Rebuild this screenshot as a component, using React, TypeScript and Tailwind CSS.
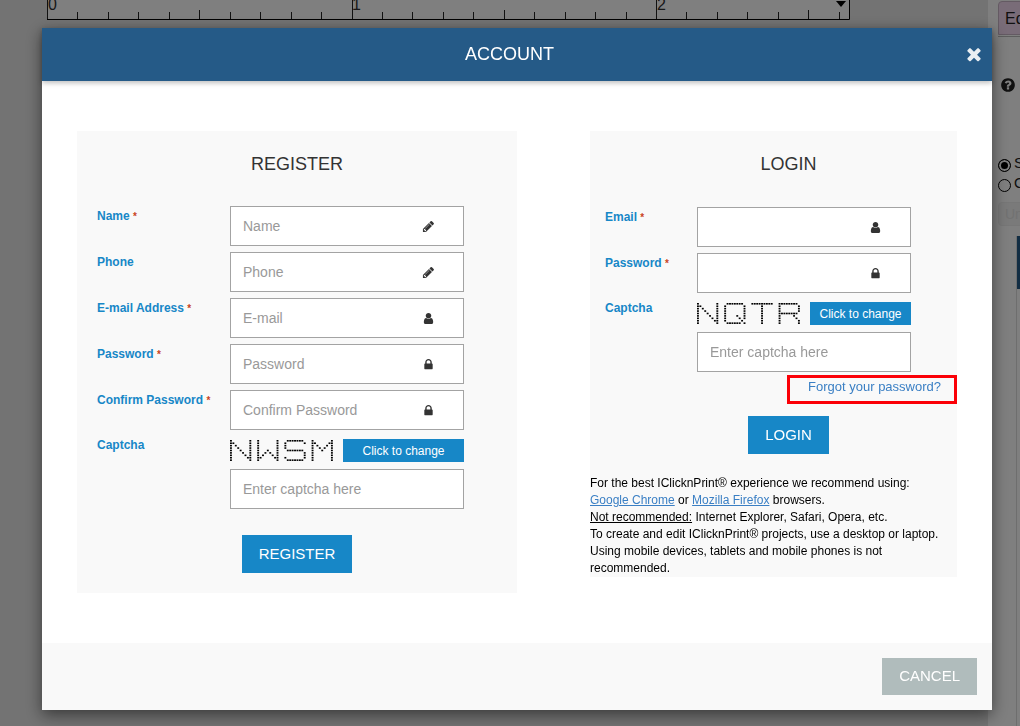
import { useState } from "react";

const ICONS = {
  times:
    "M1490 1322q0 40-28 68l-136 136q-28 28-68 28t-68-28l-294-294-294 294q-28 28-68 28t-68-28l-136-136q-28-28-28-68t28-68l294-294-294-294q-28-28-28-68t28-68l136-136q28-28 68-28t68 28l294 294 294-294q28-28 68-28t68 28l136 136q28 28 28 68t-28 68l-294 294 294 294q28 28 28 68z",
  lock: "M640 768h512v-192q0-106-75-181t-181-75-181 75-75 181v192zm832 96v576q0 40-28 68t-68 28h-960q-40 0-68-28t-28-68v-576q0-40 28-68t68-28h32v-192q0-184 132-316t316-132 316 132 132 316v192h32q40 0 68 28t28 68z",
  user: "M1536 1399q0 109-62.5 187t-150.5 78h-854q-88 0-150.5-78t-62.5-187q0-85 8.5-160.5t31.5-152 58.5-131 94-89 134.5-34.5q131 128 313 128t313-128q76 0 134.5 34.5t94 89 58.5 131 31.5 152 8.5 160.5zm-256-887q0 159-112.5 271.5t-271.5 112.5-271.5-112.5-112.5-271.5 112.5-271.5 271.5-112.5 271.5 112.5 112.5 271.5z",
  pencil:
    "M491 1536l91-91-235-235-91 91v107h128v128h107zm523-928q0-22-22-22-10 0-17 7l-542 542q-7 7-7 17 0 22 22 22 10 0 17-7l542-542q7-7 7-17zm-54-192l416 416-832 832h-416v-416zm683 96q0 53-37 90l-166 166-416-416 166-165q36-38 90-38 53 0 91 38l235 234q37 39 37 91z",
  question:
    "M1024 1376v-192q0-14-9-23t-23-9h-192q-14 0-23 9t-9 23v192q0 14 9 23t23 9h192q14 0 23-9t9-23zm256-672q0-88-55.5-163t-138.5-116-170-41q-243 0-371 213-15 24 8 42l132 100q7 6 19 6 16 0 25-12 53-68 86-92 34-24 86-24 48 0 85.5 26t37.5 59q0 38-20 61t-68 45q-63 28-115.5 86.5t-52.5 125.5v36q0 14 9 23t23 9h192q14 0 23-9t9-23q0-19 21.5-49.5t54.5-49.5q32-18 49-28.5t46-35 44.5-48 28-60.5 12.5-81zm384 192q0 209-103 385.5t-279.5 279.5-385.5 103-385.5-103-279.5-279.5-103-385.5 103-385.5 279.5-279.5 385.5-103 385.5 103 279.5 279.5 103 385.5z",
};

type IconName = keyof typeof ICONS;

function Icon({ name, className }: { name: IconName; className: string }) {
  return (
    <svg viewBox="0 0 1792 1792" fill="currentColor" aria-hidden="true" className={className}>
      <path d={ICONS[name]} />
    </svg>
  );
}

// dot patterns for the captcha, 9x9 per character
const DOTS: Record<string, string[]> = {
  N: ["#.......#", "##......#", "#.#.....#", "#..#....#", "#...#...#", "#....#..#", "#.....#.#", "#......##", "#.......#"],
  W: ["#.......#", "#.......#", "#.......#", "#.......#", "#...#...#", "#..#.#..#", "#.#...#.#", "##.....##", "#.......#"],
  S: [".#######.", "#.......#", "#........", "#........", ".#######.", "........#", "........#", "#.......#", ".#######."],
  M: ["#.......#", "##.....##", "#.#...#.#", "#..#.#..#", "#...#...#", "#.......#", "#.......#", "#.......#", "#.......#"],
  Q: [".#######.", "#.......#", "#.......#", "#.......#", "#.......#", "#....#..#", "#.....#.#", "#......#.", ".######.#"],
  T: ["#########", "....#....", "....#....", "....#....", "....#....", "....#....", "....#....", "....#....", "....#...."],
  R: ["########.", "#.......#", "#.......#", "#.......#", "########.", "#.....#..", "#......#.", "#.......#", "#.......#"],
};

function Captcha({ code }: { code: string }) {
  return (
    <svg viewBox="0 0 104 23" role="img" aria-label="Captcha" className="h-[23px] w-[104px] shrink-0">
      {code.split("").map((char, i) =>
        DOTS[char].map((row, y) =>
          row.split("").map((dot, x) =>
            dot === "#" ? (
              <rect key={`${i}-${y}-${x}`} x={i * 27.2 + x * 2.42} y={1 + y * 2.42} width="1.9" height="1.6" />
            ) : null
          )
        )
      )}
    </svg>
  );
}

interface FieldProps {
  id: string;
  label: string;
  type?: string;
  placeholder?: string;
  required?: boolean;
  icon: IconName;
  columns: string;
}

const inputClass =
  "block h-10 w-full border border-[#a3a3a3] bg-white pl-3 text-sm text-[#333] placeholder:text-[#999] outline-none";
const labelClass = "text-xs leading-4 font-bold text-[#1787c7]";

function Field({ id, label, type = "text", placeholder, required, icon, columns }: FieldProps) {
  return (
    <div className={`grid ${columns}`}>
      <label htmlFor={id} className={`${labelClass} pt-[2px]`}>
        {label} {required && <span className="text-[10px] text-[#c9431e]">*</span>}
      </label>
      <div className="relative">
        <input id={id} name={id} type={type} placeholder={placeholder} className={`${inputClass} pr-12`} />
        <Icon name={icon} className="absolute top-[14px] right-[29px] size-[13px] text-[#333]" />
      </div>
    </div>
  );
}

function CaptchaField({ id, code, columns }: { id: string; code: string; columns: string }) {
  return (
    <div className={`grid ${columns}`}>
      <label htmlFor={id} className={`${labelClass} pt-px`}>
        Captcha
      </label>
      <div className="pt-[3px]">
        <div className="mb-[7px] flex gap-[9px]">
          <Captcha code={code} />
          <button type="button" className="h-[23px] flex-1 bg-[#1787c7] text-xs whitespace-nowrap text-white">
            Click to change
          </button>
        </div>
        <input id={id} name={id} type="text" placeholder="Enter captcha here" className={inputClass} />
      </div>
    </div>
  );
}

const submitClass = "h-[38px] bg-[#1787c7] px-[17px] text-[15px] text-white uppercase";

function RegisterForm() {
  const columns = "grid-cols-[133px_1fr]";
  return (
    <form className="bg-[#f9f9f9] pt-[21px] pb-5">
      <h2 className="text-center text-lg leading-6 text-[#333]">REGISTER</h2>
      <div className="flex flex-col gap-1.5 pt-[30px] pr-[53px] pl-5">
        <Field id="name" label="Name" placeholder="Name" required icon="pencil" columns={columns} />
        <Field id="phone" label="Phone" placeholder="Phone" icon="pencil" columns={columns} />
        <Field id="email" label="E-mail Address" placeholder="E-mail" required icon="user" columns={columns} />
        <Field id="password" label="Password" type="password" placeholder="Password" required icon="lock" columns={columns} />
        <Field id="confirm" label="Confirm Password" type="password" placeholder="Confirm Password" required icon="lock" columns={columns} />
        <CaptchaField id="captcha" code="NWSM" columns={columns} />
      </div>
      <div className="pt-[26px] text-center">
        <button type="button" className={submitClass}>
          Register
        </button>
      </div>
    </form>
  );
}

function LoginForm() {
  const columns = "grid-cols-[92px_1fr]";
  return (
    <form className="self-start bg-[#f9f9f9] pt-[21px]">
      <h2 className="pl-[30px] text-center text-lg leading-6 text-[#333]">LOGIN</h2>
      <div className="flex flex-col gap-1.5 pt-[31px] pr-[46px] pl-[15px]">
        <Field id="login-email" label="Email" required icon="user" columns={columns} />
        <Field id="login-password" label="Password" type="password" required icon="lock" columns={columns} />
        <CaptchaField id="login-captcha" code="NQTR" columns={columns} />
      </div>
      <div className="flex justify-end pt-[3px]">
        <div className="flex h-[29px] w-[170px] justify-end border-3 border-[#fb0007] pr-[13px]">
          <a href="#forgot" className="text-[13px] leading-[18px] text-[#3a7fc4]">
            Forgot your password?
          </a>
        </div>
      </div>
      <div className="pt-3 pl-[30px] text-center">
        <button type="button" className={submitClass}>
          Login
        </button>
      </div>
      <p className="pt-[21px] text-xs leading-[17px] text-black">
        For the best IClicknPrint® experience we recommend using:
        <br />
        <a href="#chrome" className="text-[#3a7fc4] underline">
          Google Chrome
        </a>{" "}
        or{" "}
        <a href="#firefox" className="text-[#3a7fc4] underline">
          Mozilla Firefox
        </a>{" "}
        browsers.
        <br />
        <u>Not recommended:</u> Internet Explorer, Safari, Opera, etc.
        <br />
        To create and edit IClicknPrint® projects, use a desktop or laptop.
        <br />
        Using mobile devices, tablets and mobile phones is not
        <br />
        recommended.
      </p>
    </form>
  );
}

function Ruler() {
  const ticks = Array.from({ length: 27 }, (_, i) => i);
  return (
    <svg viewBox="0 0 803 20" className="h-5 w-[803px]">
      <rect width="803" height="20" fill="#fff" />
      {ticks.map((i) => {
        const top = i % 10 === 0 ? 0 : i % 5 === 0 ? 10 : 12;
        return <rect key={i} x={Math.round(i * 30.45)} y={top} width="1" height={20 - top} fill="#222" />;
      })}
      <path d="M0 19.5H802.5V0" fill="none" stroke="#000" />
      <g fontSize="16" fill="#333">
        <text x="1" y="10">0</text>
        <text x="305" y="10">1</text>
        <text x="610" y="10">2</text>
      </g>
      <path d="M789 1h10l-5 6z" />
    </svg>
  );
}

const radioClass =
  "mt-1 size-[13px] shrink-0 appearance-none rounded-full border border-black checked:bg-black checked:shadow-[inset_0_0_0_2px_#fff]";

function Editor() {
  const [side, setSide] = useState("s");
  return (
    <div className="flex h-full bg-[#e6e6e6]">
      <main className="min-w-0 flex-1 overflow-hidden pl-[47px]">
        <Ruler />
      </main>
      <aside className="w-8 shrink-0 overflow-hidden bg-white pt-px pl-2.5">
        <div className="w-40">
          <button
            type="button"
            className="block h-[34px] w-full rounded-t-sm border border-[#c8b4c6] bg-[#f3d9f0] pt-0.5 pl-1.5 text-left text-base leading-6 text-[#222]"
          >
            Edit
          </button>
          <div className="mt-px border-t border-[#bbb]" />
          <Icon name="question" className="mt-10 ml-0.5 size-4 text-[#222]" />
          <div className="mt-[60px] flex flex-col text-[15px] leading-5 text-[#222]">
            <label className="flex items-center gap-[3px]">
              <input type="radio" name="side" checked={side === "s"} onChange={() => setSide("s")} className={radioClass} />S
            </label>
            <label className="flex items-center gap-[3px]">
              <input type="radio" name="side" checked={side === "o"} onChange={() => setSide("o")} className={radioClass} />O
            </label>
          </div>
          <button
            type="button"
            disabled
            className="mt-[9px] block h-6 w-full rounded border border-[#efefef] bg-[#f5f5f5] pl-1.5 text-left text-sm leading-5 text-[#e4e4e4]"
          >
            Undo
          </button>
          <div className="mt-[10px] ml-[18px] h-screen border-l border-[#ddd]">
            <div className="h-[53px] bg-[#255a87]" />
          </div>
        </div>
      </aside>
    </div>
  );
}

export default function App() {
  const [open, setOpen] = useState(true);

  return (
    <div className="h-screen overflow-hidden font-['Liberation_Sans',Arial,sans-serif]">
      <Editor />
      {open && (
        <div className="fixed inset-0 overflow-auto bg-black/50 pt-7 pr-7 pb-4 pl-[42px]">
          <div role="dialog" aria-label="Account" className="bg-white shadow-[0_5px_15px_rgba(0,0,0,0.5)]">
            <header className="relative flex h-[53px] items-center bg-[#255a87] pr-2 pb-0.5 pl-[13px] text-white shadow-[0_2px_5px_rgba(0,0,0,0.26)]">
              <h1 className="flex-1 text-center text-lg leading-6">ACCOUNT</h1>
              <button type="button" aria-label="Close" onClick={() => setOpen(false)} className="text-[#e9eff3]">
                <Icon name="times" className="size-5" />
              </button>
            </header>
            <div className="grid grid-cols-[440fr_367fr] gap-[73px] px-[35px] py-[50px]">
              <RegisterForm />
              <LoginForm />
            </div>
            <footer className="flex justify-end bg-[#f9f9f9] p-[15px]">
              <button
                type="button"
                onClick={() => setOpen(false)}
                className="h-[37px] bg-[#b0bcbc] px-[17px] text-[15px] text-white uppercase"
              >
                Cancel
              </button>
            </footer>
          </div>
        </div>
      )}
    </div>
  );
}
